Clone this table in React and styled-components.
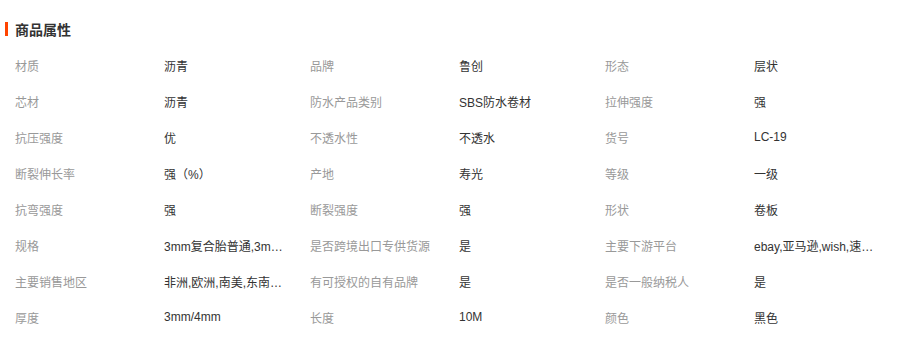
import React from 'react';
import styled, {createGlobalStyle} from "styled-components";

const GlobalStyle = createGlobalStyle`
  body {
    margin: 0;
    background: #fff;
    font-family: "Liberation Sans", "Noto Sans CJK SC", sans-serif;
  }
`

const attrs = [
  ['材质', '沥青'], ['品牌', '鲁创'], ['形态', '层状'],
  ['芯材', '沥青'], ['防水产品类别', 'SBS防水卷材'], ['拉伸强度', '强'],
  ['抗压强度', '优'], ['不透水性', '不透水'], ['货号', 'LC-19'],
  ['断裂伸长率', '强（%）'], ['产地', '寿光'], ['等级', '一级'],
  ['抗弯强度', '强'], ['断裂强度', '强'], ['形状', '卷板'],
  ['规格', '3mm复合胎普通,3mm复合胎加强'], ['是否跨境出口专供货源', '是'], ['主要下游平台', 'ebay,亚马逊,wish,速卖通'],
  ['主要销售地区', '非洲,欧洲,南美,东南亚,北美'], ['有可授权的自有品牌', '是'], ['是否一般纳税人', '是'],
  ['厚度', '3mm/4mm'], ['长度', '10M'], ['颜色', '黑色'],
];

const App = () => (
  <Wrap>
    <GlobalStyle/>
    <Title>
      <Bar/>
      <h2>商品属性</h2>
    </Title>
    <Grid>
      {attrs.map(([label, value]) => (
        <Item key={label}>
          <Label>{label}</Label>
          <Value title={value}>{value}</Value>
        </Item>
      ))}
    </Grid>
  </Wrap>
);

const Wrap = styled.div`
  width: 915px;
  height: 340px;
  padding: 19px 0 0 5px;
  box-sizing: border-box;
`

const Title = styled.div`
  display: flex;
  align-items: center;
  gap: 7px;
  height: 20px;
  margin-bottom: 8px;

  h2 {
    margin: 0;
    font-size: 14px;
    font-weight: bold;
    color: #333;
  }
`

const Bar = styled.span`
  width: 3px;
  height: 14px;
  background: #ff4400;
`

const Grid = styled.div`
  display: grid;
  grid-template-columns: repeat(3, 295px);
  padding-left: 10px;
`

const Item = styled.div`
  display: flex;
  align-items: center;
  height: 36px;
  font-size: 12px;
`

const Label = styled.span`
  width: 149px;
  flex-shrink: 0;
  color: #999;
`

const Value = styled.span`
  max-width: 120px;
  color: #333;
  white-space: nowrap;
  overflow: hidden;
  text-overflow: ellipsis;
`

export default App;
